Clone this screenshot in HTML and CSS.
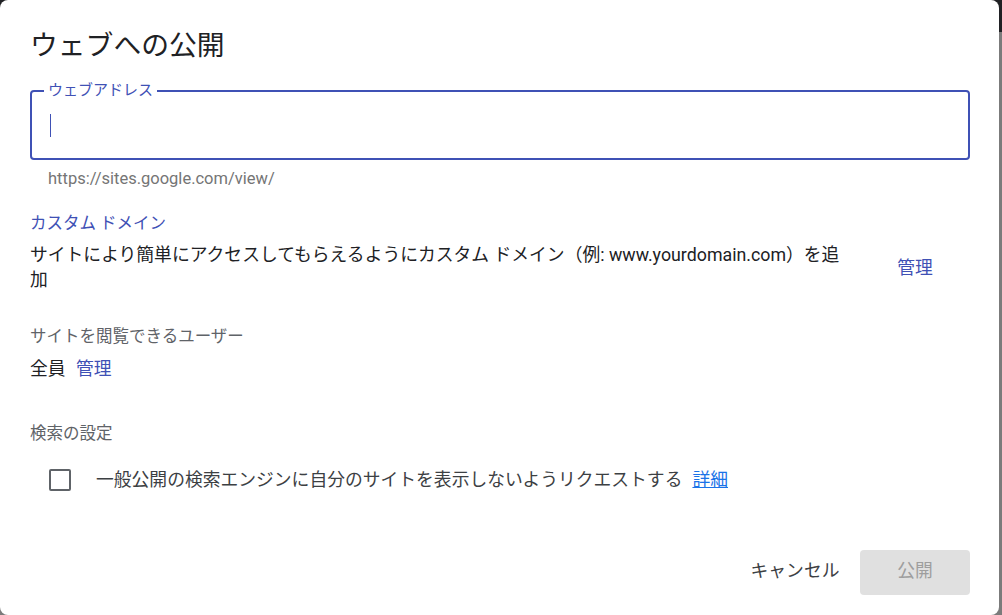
FILE: index.html
```html
<!DOCTYPE html>
<html lang="ja">
<head>
    <meta charset="UTF-8">
    <meta name="viewport" content="width=device-width, initial-scale=1.0">
    <title>ウェブへの公開</title>
    <link rel="stylesheet" href="styles.css">
</head>
<body>
    <div class="dialog">
        <h1 class="dialog-title">ウェブへの公開</h1>

        <div class="address-field">
            <span class="address-label">ウェブアドレス</span>
            <span class="caret"></span>
        </div>
        <div class="address-hint">https://sites.google.com/view/</div>

        <div class="section-link">カスタム ドメイン</div>
        <div class="domain-row">
            <p class="domain-text">サイトにより簡単にアクセスしてもらえるようにカスタム ドメイン（例: www.yourdomain.com）を追加</p>
            <a href="#" class="text-button link">管理</a>
        </div>

        <div class="section-label viewers-label">サイトを閲覧できるユーザー</div>
        <div class="audience-row">
            <span>全員</span>
            <a href="#" class="link audience-manage">管理</a>
        </div>

        <div class="section-label search-label">検索の設定</div>
        <label class="check-row">
            <span class="checkbox"></span>
            <span class="check-text">一般公開の検索エンジンに自分のサイトを表示しないようリクエストする</span>
            <a href="#" class="more-link">詳細</a>
        </label>

        <div class="dialog-actions">
            <button class="text-button cancel-button">キャンセル</button>
            <button class="publish-button" disabled>公開</button>
        </div>
    </div>
</body>
</html>
```

FILE: styles.css
```css
:root {
    --indigo: #3f51b5;
    --blue: #1a73e8;
    --text-primary: #202124;
    --text-body: #3c4043;
    --text-secondary: #5f6368;
    --text-hint: #757575;
    --font: Roboto, "Noto Sans CJK JP", sans-serif;
}

* {
    margin: 0;
    padding: 0;
    box-sizing: border-box;
}

body {
    font-family: var(--font);
    color: var(--text-primary);
    background: linear-gradient(to bottom, #202124 32px, #7b7b7b 32px);
    height: 615px;
    overflow: hidden;
}

.dialog {
    width: 999px;
    height: 615px;
    background: #fff;
    border-radius: 8px;
    padding: 28px 29px 20px 30px;
    display: flex;
    flex-direction: column;
}

.dialog-title {
    font-size: 27.8px;
    line-height: 36px;
    font-weight: 400;
    color: var(--text-primary);
}

/* アウトライン入力欄 */
.address-field {
    position: relative;
    margin-top: 26px;
    height: 70px;
    border: 2px solid var(--indigo);
    border-radius: 4px;
    padding: 0 18px;
    display: flex;
    align-items: center;
}

.address-label {
    position: absolute;
    top: -11px;
    left: 12px;
    padding: 0 4px;
    background: #fff;
    color: var(--indigo);
    font-size: 15px;
    line-height: 18px;
}

.caret {
    width: 1px;
    height: 23px;
    background: var(--indigo);
}

.address-hint {
    margin: 9px 0 0 18px;
    font-size: 16.5px;
    line-height: 20px;
    color: var(--text-hint);
}

.section-link {
    margin-top: 23px;
    font-size: 16.5px;
    line-height: 24px;
    color: var(--indigo);
}

.link {
    color: var(--indigo);
    text-decoration: none;
}

.domain-row {
    margin-top: 6px;
    display: flex;
    align-items: center;
    gap: 12px;
}

.domain-text {
    flex: 1;
    font-size: 17.8px;
    line-height: 25px;
    color: var(--text-primary);
}

.text-button {
    width: 110px;
    padding: 10px 0;
    font-family: var(--font);
    font-size: 17.8px;
    line-height: 25px;
    text-align: center;
    background: none;
    border: none;
    border-radius: 4px;
}

.section-label {
    font-size: 16.5px;
    line-height: 24px;
    color: var(--text-secondary);
}

.viewers-label {
    margin-top: 33px;
}

.audience-row {
    margin-top: 7px;
    font-size: 17.8px;
    line-height: 25px;
    color: var(--text-primary);
}

.audience-manage {
    margin-left: 6px;
}

.search-label {
    margin-top: 41px;
}

.check-row {
    margin-top: 21px;
    display: flex;
    align-items: center;
    font-size: 17.8px;
    line-height: 25px;
    color: var(--text-body);
}

.checkbox {
    width: 22px;
    height: 22px;
    margin-left: 19px;
    border: 2px solid var(--text-secondary);
    border-radius: 2px;
}

.check-text {
    margin-left: 25px;
}

.more-link {
    margin-left: 10px;
    color: var(--blue);
    text-decoration: underline;
}

.dialog-actions {
    margin-top: auto;
    display: flex;
    justify-content: flex-end;
    align-items: center;
    gap: 10px;
}

.cancel-button {
    padding: 8px 0 12px;
    color: var(--text-body);
}

.publish-button {
    width: 110px;
    height: 45px;
    padding-bottom: 4px;
    font-family: var(--font);
    font-size: 17.8px;
    line-height: 25px;
    color: #9e9e9e;
    background: #e0e0e0;
    border: none;
    border-radius: 4px;
}
```
